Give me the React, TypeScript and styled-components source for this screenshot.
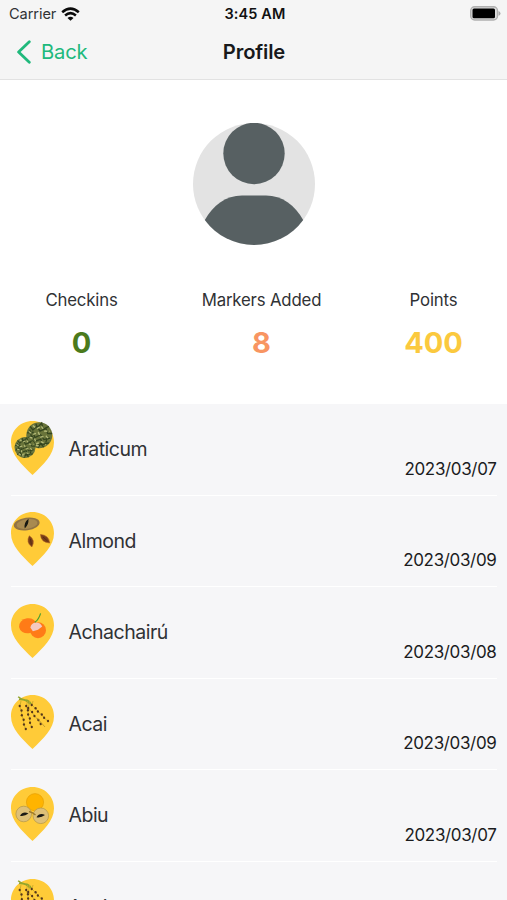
import React from "react";
import styled, { createGlobalStyle } from "styled-components";

const GlobalStyle = createGlobalStyle`
  * { box-sizing: border-box; }
  html, body { margin: 0; padding: 0; overflow: hidden; }
  body { font-family: Inter, "Liberation Sans", sans-serif; color: #303235; background: #f6f6f8; }
`;

const Screen = styled.div`
  width: 507px;
  height: 900px;
  display: flex;
  flex-direction: column;
  overflow: hidden;
`;

const Header = styled.header`
  flex: none;
  height: 80px;
  background: #f5f5f5;
  border-bottom: 1px solid #e2e2e2;
`;

const Bar = styled.div<{ $height: number; $left: number; $right: number }>`
  display: grid;
  grid-template-columns: 1fr auto 1fr;
  align-items: center;
  height: ${(p) => p.$height}px;
  padding: 0 ${(p) => p.$right}px 0 ${(p) => p.$left}px;
`;

const Carrier = styled.div`
  display: flex;
  align-items: center;
  gap: 5px;
  font-size: 14.6px;
  line-height: 18px;
  letter-spacing: -0.08px;
`;

const Clock = styled.div`
  font-size: 14.5px;
  line-height: 18px;
  font-weight: 600;
  letter-spacing: 0.1px;
  color: #111;
`;

const BatterySlot = styled.div`
  display: flex;
  justify-content: flex-end;
`;

const BackButton = styled.button`
  display: flex;
  align-items: center;
  gap: 9px;
  padding: 0;
  border: 0;
  background: none;
  color: #20b97c;
  font: 400 20.2px/24px Inter, sans-serif;
  letter-spacing: -0.2px;
`;

const Title = styled.h1`
  margin: 0;
  font-size: 20.2px;
  line-height: 24px;
  font-weight: 600;
  letter-spacing: -0.15px;
  color: #18191b;
`;

const Profile = styled.section`
  flex: none;
  height: 324px;
  padding-top: 43px;
  background: #fff;
`;

const Avatar = styled.svg`
  display: block;
  width: 122px;
  height: 122px;
  margin: 0 auto;
`;

const Stats = styled.div`
  display: grid;
  grid-template-columns: 163px 197px 147px;
  margin-top: 43px;
  text-align: center;
`;

const StatLabel = styled.div`
  font-size: 16.8px;
  line-height: 24px;
  letter-spacing: -0.18px;
`;

const StatValue = styled.div<{ $color: string }>`
  margin-top: 12px;
  font-size: 29px;
  line-height: 38px;
  font-weight: 700;
  color: ${(p) => p.$color};
`;

const List = styled.ul`
  flex: 1;
  min-height: 0;
  margin: 0;
  padding: 0 10.5px 0 11px;
  list-style: none;
  background: #f6f6f8;
  overflow: hidden;
`;

const Row = styled.li`
  display: flex;
  align-items: flex-start;
  height: 91.6px;
  border-bottom: 1.5px solid #fff;
`;

const Pin = styled.svg`
  flex: none;
  width: 43px;
  height: 54px;
  margin-top: 16.6px;
`;

const FruitName = styled.div`
  flex: 1;
  margin: 33px 0 0 14.5px;
  font-size: 19.5px;
  line-height: 24px;
  letter-spacing: -0.5px;
`;

const DateText = styled.time`
  align-self: flex-end;
  margin-bottom: 14px;
  font-size: 17px;
  line-height: 24px;
  letter-spacing: -0.34px;
  color: #1b1c1e;
`;

type Fruit = "araticum" | "almond" | "achachairu" | "acai" | "abiu";

const araticumFruits = [
  { x: 28.3, y: 14.2, r: 13 },
  { x: 14, y: 26.5, r: 10.5 },
];

const Araticum = () => (
  <>
    {araticumFruits.map(({ x, y, r }) => (
      <g key={x} transform={`translate(${x} ${y}) rotate(25) scale(${r / 13})`} fill="none">
        <circle r="13" fill="#69743a" />
        <g stroke="#34451f" strokeWidth="1.3">
          <path d="M-12-4l4 2l2-5l5 3l4-5l4 4l4-2M-12 3l5-3l4 4l4-5l5 3l5-4M-9 8l3-4l5 3l4-4l4 4l5-4M-5 12l2-4l5 3l3-4l4 2" />
          <path d="M-8-9l3 3l2-6l4 5l4-5M-11-1l4 5l-2 3M5 6l-1 6M8-3l1 7" />
        </g>
        <g stroke="#b4ba78" strokeWidth="1.4" strokeDasharray="3 2.2">
          <path d="M-10-6l5 1l3-4l5 3l5-2M-11 1l5 1l4-4l4 3l5-3l4 2M-8 6l5-1l4 4l4-4l5 1M-4 10l5 1l5-2" />
        </g>
      </g>
    ))}
  </>
);

const Almond = () => (
  <>
    <g transform="rotate(-8 15.7 12)">
      <ellipse cx="15.7" cy="12" rx="13" ry="6.3" fill="#917344" />
      <ellipse cx="16" cy="12" rx="10.5" ry="4.8" fill="#a98a50" />
    </g>
    <path d="M17.5 6.8q-5 4-3.7 9.6q4-3.4 3.7-9.6z" fill="#171711" />
    <g fill="#783d17" stroke="#a75e24" strokeWidth=".6">
      <path d="M18.3 23.8q-3.6 6.5 2.5 11.2q4-7-2.5-11.2z" />
      <path d="M29.5 22.5q.2 8 9.3 8.5q-1-8-9.3-8.5z" />
    </g>
    <path d="M19.4 27l1 5.5M32 25l4.5 4" stroke="#4c2918" strokeWidth=".8" />
  </>
);

const Achachairu = () => (
  <>
    <ellipse cx="17" cy="21.8" rx="9" ry="7.5" transform="rotate(-8 17 21.8)" fill="#ff7b17" />
    <circle cx="27" cy="26.2" r="8" fill="#ff7b17" />
    <path d="M19.3 23.5q1-4.4 5.5-5q5 .2 6.4 4.1l-4.2 3.1l-5.1 1.5z" fill="#f5c9c1" />
    <path d="M23.8 18.3q4-2.8 5.8-9" fill="none" stroke="#4b9f31" strokeWidth="1.2" />
  </>
);

const acaiStrands = [
  { x: 9, y: 11, dx: 5.3, dy: 23, n: 6 },
  { x: 15.5, y: 11, dx: 4.8, dy: 21, n: 6 },
  { x: 17.5, y: 13, dx: 12.5, dy: 16, n: 5 },
  { x: 21, y: 10, dx: 15.5, dy: 16, n: 6 },
];

const Acai = () => (
  <>
    <path d="M7.2 1.8q3 3 7 3.2t6 4M8 4.5q7-.6 11 4.5" fill="none" stroke="#93a52d" strokeWidth="1.5" />
    {acaiStrands.map((s) => (
      <g key={s.x}>
        <path d={`M${s.x + 1} 6L${s.x} ${s.y}l${s.dx} ${s.dy}`} fill="none" stroke="#c9ab28" strokeWidth=".9" />
        {Array.from({ length: s.n }, (_, i) => (
          <ellipse
            key={i}
            cx={s.x + (s.dx * i) / (s.n - 1) + (i % 2 ? 0.5 : -0.3)}
            cy={s.y + (s.dy * i) / (s.n - 1)}
            rx="1.1"
            ry="1.25"
            fill="#55361c"
          />
        ))}
      </g>
    ))}
    <path d="M26 23l8 9" stroke="#a9882a" strokeWidth=".7" />
  </>
);

const Abiu = () => (
  <>
    <circle cx="24" cy="15.2" r="8.6" fill="#ffb400" stroke="#e29a00" strokeWidth=".6" />
    <g fill="#dec078" stroke="#b89a4c" strokeWidth=".8">
      <circle cx="12.7" cy="27" r="7.8" />
      <circle cx="29.8" cy="28.8" r="7.8" />
    </g>
    <path d="M18 24.5q4 1 6.5 3.5" fill="none" stroke="#9c772a" strokeWidth="1.3" />
    <path d="M9 28.8q3-5 8.5-2.3q-4 3.2-8.5 2.3zM25.5 30.3q3-5 8.5-2.3q-4 3.2-8.5 2.3z" fill="#1c1a15" />
  </>
);

const drawings: Record<Fruit, () => React.JSX.Element> = {
  araticum: Araticum,
  almond: Almond,
  achachairu: Achachairu,
  acai: Acai,
  abiu: Abiu,
};

const FruitPin = ({ fruit }: { fruit: Fruit }) => {
  const Drawing = drawings[fruit];
  return (
    <Pin viewBox="0 0 43 54">
      <path d="M21.5 0C9.4 0 0 9.4 0 21.2C0 34 11 43.6 21.5 54C32 43.6 43 34 43 21.2C43 9.4 33.6 0 21.5 0z" fill="#ffcb38" />
      <Drawing />
    </Pin>
  );
};

const WifiIcon = () => (
  <svg width="19" height="14" viewBox="0 0 19 14" fill="none" stroke="#0b0b0b" strokeWidth="2.5">
    <path d="M1.2 5.3Q9.5-2 17.8 5.3M4.1 8.5Q9.5 3.8 14.9 8.5" />
    <path d="M6.5 10.9Q9.5 8.4 12.5 10.9L9.5 13.8z" fill="#0b0b0b" stroke="none" />
  </svg>
);

const BatteryIcon = () => (
  <svg width="31" height="15" viewBox="0 0 31 15">
    <rect x=".7" y=".7" width="26.8" height="13.3" rx="4" fill="#ddd" stroke="#b0b0b0" strokeWidth="1.4" />
    <rect x="2.5" y="2.6" width="22.5" height="9.6" rx="1.5" fill="#000" />
    <path d="M28.5 5q2 .8 2 2.4t-2 2.4z" fill="#aaa" />
  </svg>
);

const stats = [
  { label: "Checkins", value: 0, color: "#4b7a1c" },
  { label: "Markers Added", value: 8, color: "#f89562" },
  { label: "Points", value: 400, color: "#fbc93e" },
];

const rows: { fruit: Fruit; name: string; date: string }[] = [
  { fruit: "araticum", name: "Araticum", date: "2023/03/07" },
  { fruit: "almond", name: "Almond", date: "2023/03/09" },
  { fruit: "achachairu", name: "Achachairú", date: "2023/03/08" },
  { fruit: "acai", name: "Acai", date: "2023/03/09" },
  { fruit: "abiu", name: "Abiu", date: "2023/03/07" },
  { fruit: "acai", name: "Acai", date: "" },
];

export default function App() {
  return (
    <>
      <GlobalStyle />
      <Screen>
        <Header>
          <Bar $height={27} $left={9} $right={6}>
            <Carrier>
              Carrier <WifiIcon />
            </Carrier>
            <Clock>3:45 AM</Clock>
            <BatterySlot>
              <BatteryIcon />
            </BatterySlot>
          </Bar>
          <Bar $height={50} $left={17} $right={16}>
            <BackButton>
              <svg width="15" height="24" viewBox="0 0 15 24" fill="none" stroke="currentColor" strokeWidth="2.8" strokeLinecap="round" strokeLinejoin="round">
                <path d="M12.3 1.7L1.6 12l10.7 10.3" />
              </svg>
              Back
            </BackButton>
            <Title>Profile</Title>
            <span />
          </Bar>
        </Header>
        <Profile>
          <Avatar viewBox="0 0 122 122">
            <circle cx="61" cy="61" r="61" fill="#e3e3e3" />
            <circle cx="61" cy="30.5" r="30.7" fill="#576062" />
            <path d="M11.8 97C20 82 33 72.4 49 72.4H73C89 72.4 102 82 110.2 97A61 61 0 0 1 11.8 97z" fill="#576062" />
          </Avatar>
          <Stats>
            {stats.map((s) => (
              <div key={s.label}>
                <StatLabel>{s.label}</StatLabel>
                <StatValue $color={s.color}>{s.value}</StatValue>
              </div>
            ))}
          </Stats>
        </Profile>
        <List>
          {rows.map((r, i) => (
            <Row key={i}>
              <FruitPin fruit={r.fruit} />
              <FruitName>{r.name}</FruitName>
              {r.date && <DateText>{r.date}</DateText>}
            </Row>
          ))}
        </List>
      </Screen>
    </>
  );
}
